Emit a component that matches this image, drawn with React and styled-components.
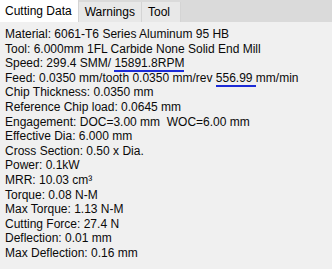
import React, { useState } from 'react';
import styled, { createGlobalStyle } from 'styled-components';

const GlobalStyle = createGlobalStyle`
    html, body {
        margin: 0;
        padding: 0;
        background: #f0f0f0;
    }
    body {
        font-family: "Liberation Sans", Arial, sans-serif;
    }
`;

const tabs = ['Cutting Data', 'Warnings', 'Tool'];

function Mark({ children }) {
    return <Ink>{children}</Ink>;
}

const lines = [
    'Material: 6061-T6 Series Aluminum 95 HB',
    'Tool: 6.000mm 1FL Carbide None Solid End Mill',
    <>Speed: 299.4 SMM/ <Mark>15891.8RPM</Mark></>,
    <>Feed: 0.0350 mm/tooth 0.0350 mm/rev <Mark>556.99 </Mark>mm/min</>,
    'Chip Thickness: 0.0350 mm',
    'Reference Chip load: 0.0645 mm',
    <>Engagement: DOC=3.00 mm&nbsp;&nbsp;WOC=6.00 mm</>,
    'Effective Dia: 6.000 mm',
    'Cross Section: 0.50 x Dia.',
    'Power: 0.1kW',
    'MRR: 10.03 cm³',
    'Torque: 0.08 N-M',
    'Max Torque: 1.13 N-M',
    'Cutting Force: 27.4 N',
    'Deflection: 0.01 mm',
    'Max Deflection: 0.16 mm',
];

const App = () => {
    const [active, setActive] = useState(0);
    return (
        <Window>
            <GlobalStyle />
            <TabStrip>
                {tabs.map((t, i) => (
                    <Tab key={t} $active={i === active} onClick={() => setActive(i)}>
                        {t}
                    </Tab>
                ))}
            </TabStrip>
            <Panel>
                {lines.map((l, i) => (
                    <Line key={i}>{l}</Line>
                ))}
            </Panel>
        </Window>
    );
};

const Window = styled.div`
    width: 332px;
    height: 269px;
    background: #f0f0f0;
    display: flex;
    flex-direction: column;
    overflow: hidden;
`;

const TabStrip = styled.div`
    display: flex;
    align-items: flex-end;
    height: 22px;
    background: #dadada;
`;

const Tab = styled.div`
    height: ${p => (p.$active ? '22px' : '20px')};
    box-sizing: border-box;
    padding: 0 6px 0 ${p => (p.$active ? '5px' : '6px')};
    display: flex;
    align-items: center;
    font-size: 12px;
    color: #000;
    background: ${p => (p.$active ? '#ffffff' : '#e8e8e8')};
    border-right: 1px solid #d4d4d4;
    cursor: default;
    &:last-child {
        padding-right: 10px;
    }
`;

const Panel = styled.div`
    display: flex;
    flex-direction: column;
    padding: 5px 0 0 5px;
`;

const Line = styled.div`
    font-size: 12px;
    line-height: 14.6px;
    color: #0a0a0a;
    white-space: nowrap;
`;

const Ink = styled.span`
    border-bottom: 2px solid #1c2bd6;
`;

export default App;
